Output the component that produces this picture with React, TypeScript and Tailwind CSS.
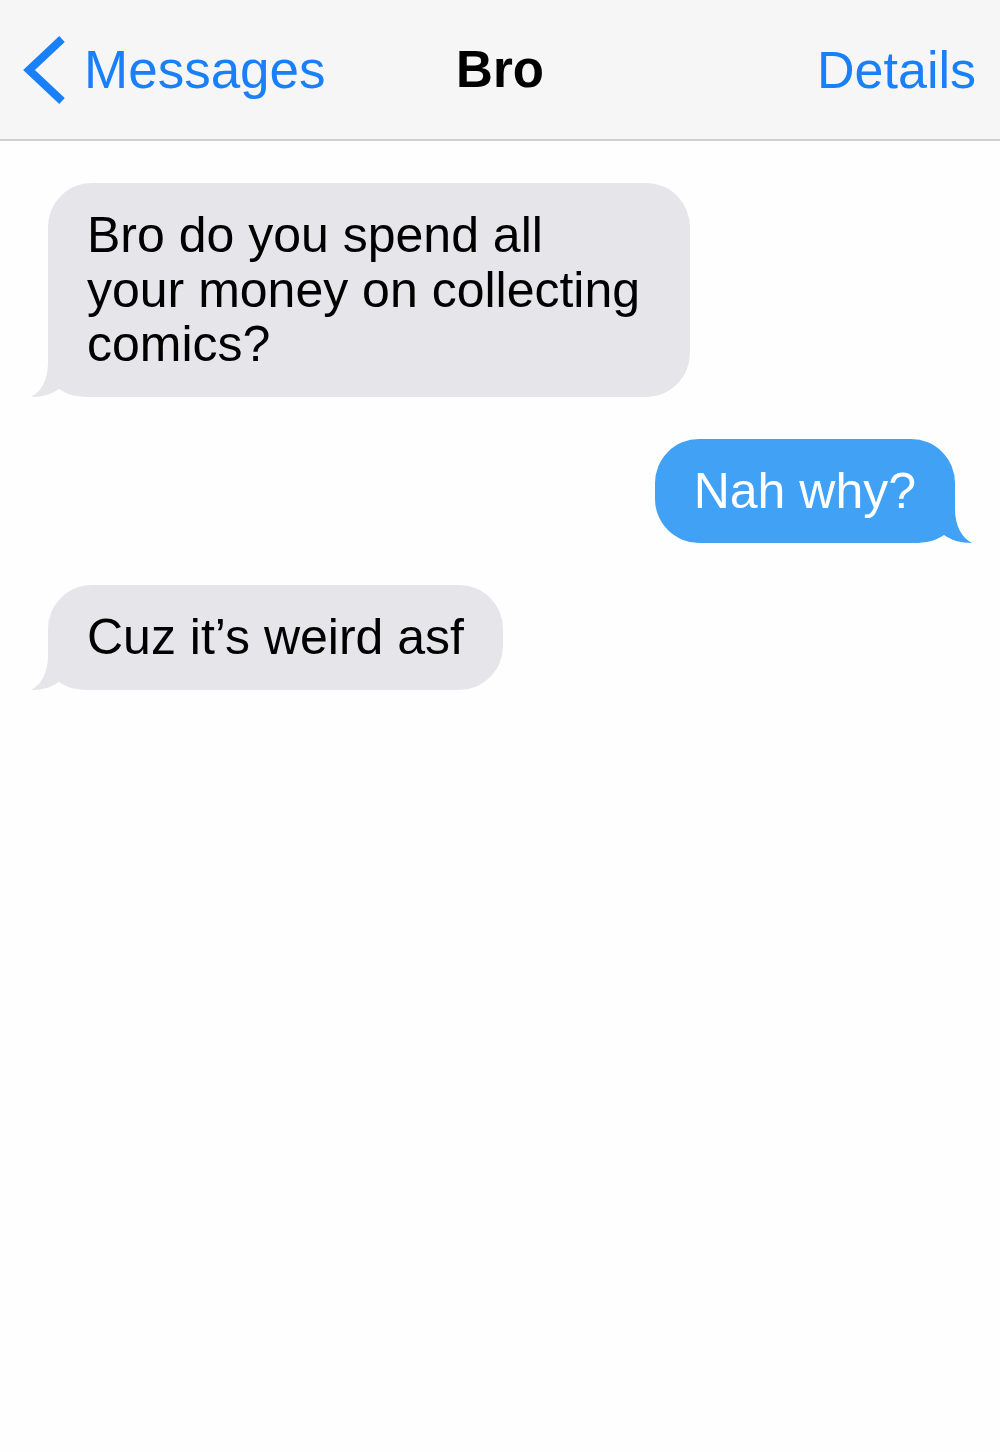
import React from 'react';

interface Message {
  text: string;
  fromMe: boolean;
  width?: string;
}

const messages: Message[] = [
  { text: 'Bro do you spend all\nyour money on collecting\ncomics?', fromMe: false, width: 'w-[642px]' },
  { text: 'Nah why?', fromMe: true },
  { text: 'Cuz it\u2019s weird asf', fromMe: false },
];

function Tail({ color, right }: { color: string; right?: boolean }) {
  return (
    <svg
      width="60"
      height="50"
      viewBox="0 0 60 50"
      className={`absolute bottom-0 ${right ? '-right-[18px] -scale-x-100' : '-left-[18px]'}`}
    >
      <path
        d="M18 0 L18 16 C18 33 11 45 1 50 C13 50 22 47 29 42 C38 48 46 50 60 50 L60 0 Z"
        fill={color}
      />
    </svg>
  );
}

function Bubble({ msg }: { msg: Message }) {
  const color = msg.fromMe ? '#41a1f5' : '#e5e5ea';
  return (
    <div className={`flex ${msg.fromMe ? 'justify-end pr-[45px]' : 'justify-start pl-[48px]'}`}>
      <div
        className={`relative rounded-[44px] px-[39px] py-[25px] text-[50px] leading-[54.5px] whitespace-pre-line ${
          msg.fromMe ? 'bg-[#41a1f5] text-white' : 'bg-[#e5e5ea] text-black'
        } ${msg.width ?? ''}`}
      >
        <Tail color={color} right={msg.fromMe} />
        <span className="relative">{msg.text}</span>
      </div>
    </div>
  );
}

export default function App() {
  return (
    <div
      className="min-h-[1452px] bg-[#fefefe]"
      style={{ fontFamily: '"Liberation Sans", Arial, sans-serif' }}
    >
      <header className="h-[141px] bg-[#f6f6f6] border-b-2 border-[#cfcfcf] flex items-center justify-between pl-[22px] pr-[24px] relative">
        <div className="flex items-center gap-[18px] text-[#1a80fa]">
          <svg width="44" height="68" viewBox="0 0 44 68">
            <polyline
              points="40,3 7,34 40,65"
              fill="none"
              stroke="#1a80fa"
              strokeWidth="8"
              strokeLinecap="butt"
              strokeLinejoin="miter"
            />
          </svg>
          <span className="text-[53px] leading-none">Messages</span>
        </div>
        <div className="absolute left-1/2 -translate-x-1/2 text-[51px] font-bold text-black leading-none">
          Bro
        </div>
        <span className="text-[52px] text-[#1a80fa] leading-none">Details</span>
      </header>

      <main className="pt-[42px] flex flex-col gap-[42px]">
        {messages.map((m, i) => (
          <Bubble key={i} msg={m} />
        ))}
      </main>
    </div>
  );
}
